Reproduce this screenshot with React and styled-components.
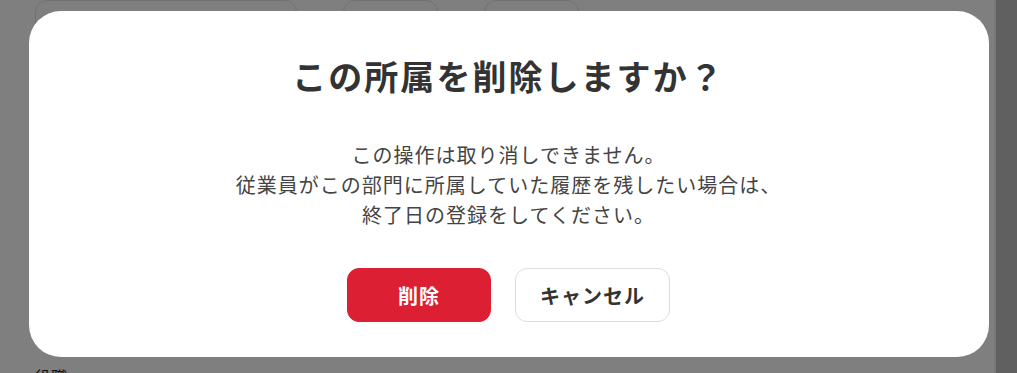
import React from "react";
import styled, { createGlobalStyle } from "styled-components";

const GlobalStyle = createGlobalStyle`
	html, body {
		margin: 0;
		height: 100%;
		overflow: hidden;
		background: #fff;
		font-family: "Noto Sans CJK JP", "Noto Sans", sans-serif;
	}
`;

const Page = styled.div`
	display: flex;
	height: 100vh;
`;

const Main = styled.main`
	flex: 1;
	padding: 0 35px;
`;

const FieldRow = styled.div`
	display: flex;
	gap: 46px;
	height: 48px;
`;

const Field = styled.div`
	width: ${(p) => p.$w}px;
	height: 100%;
	box-sizing: border-box;
	border: 1px solid #e2e2e2;
	border-radius: 12px;
`;

const Label = styled.div`
	margin-top: 316px;
	font-size: 16px;
	line-height: 24px;
	color: #222;
`;

const ScrollTrack = styled.div`
	width: 23px;
	background: #f1f1f1;
	display: flex;
	padding-left: 2px;
	box-sizing: border-box;
`;

const ScrollThumb = styled.div`
	flex: 1;
	background: #c1c1c1;
`;

const Overlay = styled.div`
	position: fixed;
	inset: 0;
	background: rgba(0, 0, 0, 0.5);
	display: flex;
	justify-content: center;
	align-items: flex-start;
	padding-top: 11px;
`;

const Dialog = styled.div`
	width: 960px;
	box-sizing: border-box;
	background: #fff;
	border-radius: 32px;
	padding: 42px 40px 35px;
	display: flex;
	flex-direction: column;
	align-items: center;
`;

const Title = styled.h2`
	margin: 0;
	font-size: 34px;
	line-height: 45px;
	font-weight: 700;
	letter-spacing: 0.06em;
	color: #333;
`;

const Message = styled.p`
	margin: 42px 0 0;
	font-size: 20px;
	line-height: 30px;
	letter-spacing: 0.05em;
	color: #444;
	text-align: center;
`;

const Actions = styled.div`
	display: flex;
	gap: 24px;
	margin-top: 38px;
`;

const Button = styled.button`
	min-width: 144px;
	height: 54px;
	padding: 0 24px;
	border-radius: 12px;
	font-family: inherit;
	font-size: 20px;
	font-weight: 700;
	letter-spacing: 0.05em;
	cursor: pointer;
	border: 1px solid ${(p) => (p.$danger ? "#dc1f33" : "#dddddd")};
	background: ${(p) => (p.$danger ? "#dc1f33" : "#fff")};
	color: ${(p) => (p.$danger ? "#fff" : "#333")};
`;

function App() {
	return (
		<>
			<GlobalStyle />
			<Page>
				<Main>
					<FieldRow>
						<Field $w={262} />
						<Field $w={95} />
						<Field $w={95} />
					</FieldRow>
					<Label>役職</Label>
				</Main>
				<ScrollTrack>
					<ScrollThumb />
				</ScrollTrack>
			</Page>
			<Overlay>
				<Dialog role="dialog">
					<Title>この所属を削除しますか？</Title>
					<Message>
						この操作は取り消しできません。
						<br />
						従業員がこの部門に所属していた履歴を残したい場合は、
						<br />
						終了日の登録をしてください。
					</Message>
					<Actions>
						<Button $danger>削除</Button>
						<Button>キャンセル</Button>
					</Actions>
				</Dialog>
			</Overlay>
		</>
	);
}

export default App;
